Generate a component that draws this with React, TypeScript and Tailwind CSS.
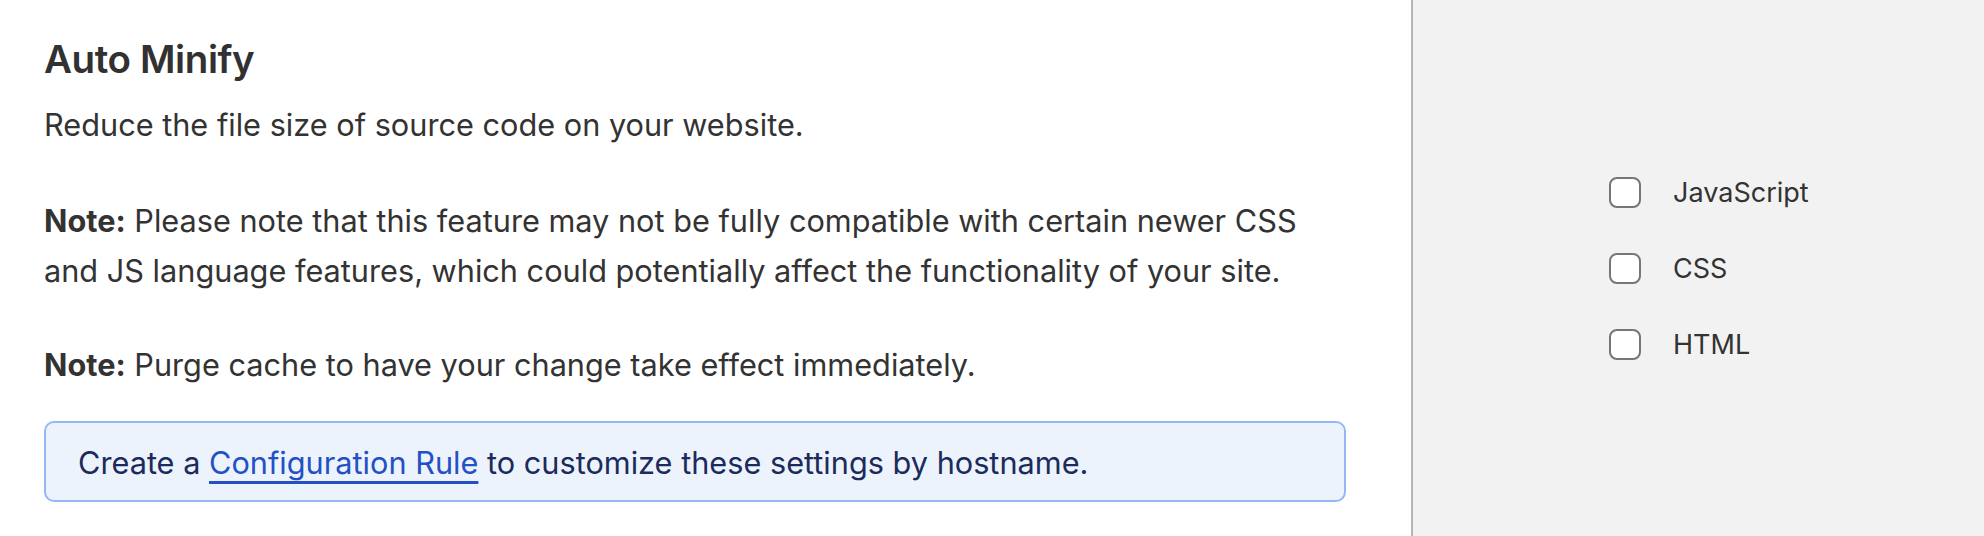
import React from "react";

function Check({ label }: { label: string }) {
  return (
    <label className="flex items-center gap-[32px] h-[31px]">
      <span className="block w-[32px] h-[31px] rounded-[8px] border-2 border-[#767676] bg-white" />
      <span className="text-[27px] leading-[31px] text-[#333333]">{label}</span>
    </label>
  );
}

export default function App() {
  return (
    <div className="flex w-[1984px] h-[536px] bg-white font-['Inter',sans-serif] overflow-hidden">
      <div className="w-[1411px] shrink-0 pl-[44px] pt-[35px]">
        <h2 className="text-[38.5px] leading-[48px] font-semibold text-[#313131] tracking-[-0.4px]">
          Auto Minify
        </h2>
        <p className="mt-[17px] text-[30.7px] leading-[50px] text-[#333333]">
          Reduce the file size of source code on your website.
        </p>
        <p className="mt-[46px] w-[1310px] text-[30.7px] leading-[50px] text-[#333333]">
          <strong className="font-bold">Note:</strong> Please note that this feature may not be fully compatible with certain newer CSS and JS language features, which could potentially affect the functionality of your site.
        </p>
        <p className="mt-[44px] text-[30.7px] leading-[50px] text-[#333333]">
          <strong className="font-bold">Note:</strong> Purge cache to have your change take effect immediately.
        </p>
        <div className="mt-[31px] w-[1302px] rounded-[10px] border-2 border-[#94b8f6] bg-[#edf3fd] pl-[32px] pt-[15px] pb-[12px] text-[30.7px] leading-[50px] text-[#1b2b5c]">
          Create a{" "}
          <a className="text-[#2351c5] underline decoration-[3px] underline-offset-[7px] [text-decoration-skip-ink:none]" href="#">
            Configuration Rule
          </a>{" "}
          to customize these settings by hostname.
        </div>
      </div>
      <div className="w-[2px] shrink-0 bg-[#b5b5b5]" />
      <div className="flex-1 bg-[#f2f2f2] flex flex-col justify-center gap-[45px] pl-[196px]">
        <Check label="JavaScript" />
        <Check label="CSS" />
        <Check label="HTML" />
      </div>
    </div>
  );
}
